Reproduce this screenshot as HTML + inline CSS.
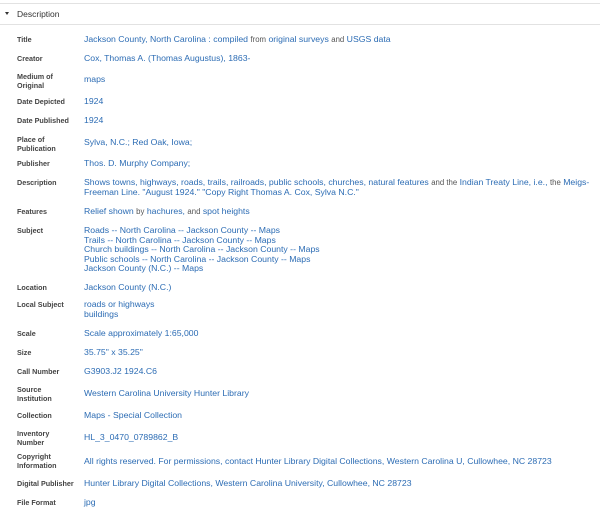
<!DOCTYPE html>
<html><head><meta charset="utf-8"><style>
body{margin:0;width:600px;height:517px;background:#fff;position:relative;overflow:hidden;font-family:"Liberation Sans",Verdana,sans-serif}
.hd{position:absolute;left:0;top:3px;width:600px;height:20px;border-top:1px solid #e2e2e2;border-bottom:1px solid #e2e2e2}
.hd .t{position:absolute;left:17px;top:5px;font-size:8.5px;color:#333}
.hd .a{position:absolute;left:5px;top:8px;width:0;height:0;border-left:2.5px solid transparent;border-right:2.5px solid transparent;border-top:3px solid #333}
.l{position:absolute;left:17px;font-size:7.2px;font-weight:bold;color:#444;line-height:9px}
.v{position:absolute;left:84px;font-size:8.7px;color:#2c6cb4;line-height:9.5px;white-space:nowrap}
.v span{color:#555;font-size:7.8px}
</style></head><body>
<div class="hd"><div class="a"></div><div class="t">Description</div></div>

<div class="l" style="top:35px">Title</div>
<div class="v" style="top:35px">Jackson County, North Carolina : compiled <span>from</span> original surveys <span>and</span> USGS data</div>

<div class="l" style="top:54px">Creator</div>
<div class="v" style="top:54px">Cox, Thomas A. (Thomas Augustus), 1863-</div>

<div class="l" style="top:72px">Medium of<br>Original</div>
<div class="v" style="top:75px">maps</div>

<div class="l" style="top:97px">Date Depicted</div>
<div class="v" style="top:97px">1924</div>

<div class="l" style="top:116px">Date Published</div>
<div class="v" style="top:116px">1924</div>

<div class="l" style="top:135px">Place of<br>Publication</div>
<div class="v" style="top:138px">Sylva, N.C.; Red Oak, Iowa;</div>

<div class="l" style="top:159px">Publisher</div>
<div class="v" style="top:159px">Thos. D. Murphy Company;</div>

<div class="l" style="top:178px">Description</div>
<div class="v" style="top:178px">Shows towns, highways, roads, trails, railroads, public schools, churches, natural features <span>and the</span> Indian Treaty Line, i.e., <span>the</span> Meigs-<br>Freeman Line. "August 1924." "Copy Right Thomas A. Cox, Sylva N.C."</div>

<div class="l" style="top:207px">Features</div>
<div class="v" style="top:207px">Relief shown <span>by</span> hachures, <span>and</span> spot heights</div>

<div class="l" style="top:226px">Subject</div>
<div class="v" style="top:226px">Roads -- North Carolina -- Jackson County -- Maps<br>Trails -- North Carolina -- Jackson County -- Maps<br>Church buildings -- North Carolina -- Jackson County -- Maps<br>Public schools -- North Carolina -- Jackson County -- Maps<br>Jackson County (N.C.) -- Maps</div>

<div class="l" style="top:283px">Location</div>
<div class="v" style="top:283px">Jackson County (N.C.)</div>

<div class="l" style="top:300px">Local Subject</div>
<div class="v" style="top:300px">roads or highways<br>buildings</div>

<div class="l" style="top:329px">Scale</div>
<div class="v" style="top:329px">Scale approximately 1:65,000</div>

<div class="l" style="top:348px">Size</div>
<div class="v" style="top:348px">35.75" x 35.25"</div>

<div class="l" style="top:367px">Call Number</div>
<div class="v" style="top:367px">G3903.J2 1924.C6</div>

<div class="l" style="top:385px">Source<br>Institution</div>
<div class="v" style="top:389px">Western Carolina University Hunter Library</div>

<div class="l" style="top:411px">Collection</div>
<div class="v" style="top:411px">Maps - Special Collection</div>

<div class="l" style="top:429px">Inventory<br>Number</div>
<div class="v" style="top:433px">HL_3_0470_0789862_B</div>

<div class="l" style="top:452px">Copyright<br>Information</div>
<div class="v" style="top:457px">All rights reserved. For permissions, contact Hunter Library Digital Collections, Western Carolina U, Cullowhee, NC 28723</div>

<div class="l" style="top:479px">Digital Publisher</div>
<div class="v" style="top:479px">Hunter Library Digital Collections, Western Carolina University, Cullowhee, NC 28723</div>

<div class="l" style="top:498px">File Format</div>
<div class="v" style="top:498px">jpg</div>
</body></html>
